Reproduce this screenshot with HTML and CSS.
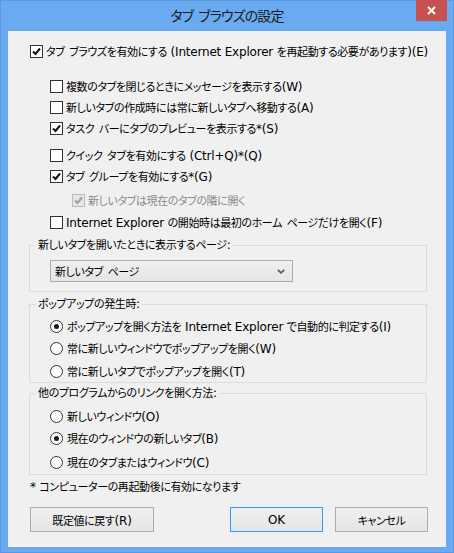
FILE: index.html
```html
<!DOCTYPE html>
<html lang="ja">
<head>
<meta charset="utf-8">
<title>タブ ブラウズの設定</title>
<link rel="stylesheet" href="styles.css">
</head>
<body>
<div class="window">
  <div class="titlebar">
    <span class="title">タブ ブラウズの設定</span>
    <button class="close" aria-label="閉じる">
      <svg width="9" height="9" viewBox="0 0 9 9"><path d="M1 1 L8 8 M8 1 L1 8" stroke="#fff" stroke-width="2" fill="none"/></svg>
    </button>
  </div>
  <div class="client">
    <label class="row main">
      <span class="cb"><svg viewBox="0 0 11 11"><path d="M2 5.5 L4.5 8 L9 2.5" stroke="#111" stroke-width="2" fill="none"/></svg></span>
      <span>タブ ブラウズを有効にする<span class="lat"> (Internet Explorer </span>を再起動する必要があります<span class="lat">)(E)</span></span>
    </label>

    <label class="row sub r1"><span class="cb"></span><span>複数のタブを閉じるときにメッセージを表示する<span class="lat">(W)</span></span></label>
    <label class="row sub r2"><span class="cb"></span><span>新しいタブの作成時には常に新しいタブへ移動する<span class="lat">(A)</span></span></label>
    <label class="row sub r3"><span class="cb"><svg viewBox="0 0 11 11"><path d="M2 5.5 L4.5 8 L9 2.5" stroke="#111" stroke-width="2" fill="none"/></svg></span><span>タスク バーにタブのプレビューを表示する<span class="lat">*(S)</span></span></label>
    <label class="row sub r4"><span class="cb"></span><span>クイック タブを有効にする<span class="lat"> (Ctrl+Q)*(Q)</span></span></label>
    <label class="row sub r5"><span class="cb"><svg viewBox="0 0 11 11"><path d="M2 5.5 L4.5 8 L9 2.5" stroke="#111" stroke-width="2" fill="none"/></svg></span><span>タブ グループを有効にする<span class="lat">*(G)</span></span></label>
    <label class="row subsub r6 disabled"><span class="cb"><svg viewBox="0 0 11 11"><path d="M2 5.5 L4.5 8 L9 2.5" stroke="#a0a0a0" stroke-width="2" fill="none"/></svg></span><span>新しいタブは現在のタブの隣に開く</span></label>
    <label class="row sub r7"><span class="cb"></span><span><span class="lat">Internet Explorer </span>の開始時は最初のホーム ページだけを開く<span class="lat">(F)</span></span></label>

    <fieldset class="group g1">
      <legend>新しいタブを開いたときに表示するページ<span class="lat">:</span></legend>
      <div class="gbody g1body">
        <div class="select">
          <span>新しいタブ ページ</span>
          <svg class="chev" width="8" height="5" viewBox="0 0 8 5"><path d="M0.8 0.8 L4 3.8 L7.2 0.8" stroke="#555" stroke-width="1.6" fill="none"/></svg>
        </div>
      </div>
    </fieldset>

    <fieldset class="group g2">
      <legend>ポップアップの発生時<span class="lat">:</span></legend>
      <div class="gbody g2body">
        <label class="row radio"><span class="rb on"></span><span>ポップアップを開く方法を<span class="lat"> Internet Explorer </span>で自動的に判定する<span class="lat">(I)</span></span></label>
        <label class="row radio m2"><span class="rb"></span><span>常に新しいウィンドウでポップアップを開く<span class="lat">(W)</span></span></label>
        <label class="row radio m3"><span class="rb"></span><span>常に新しいタブでポップアップを開く<span class="lat">(T)</span></span></label>
      </div>
    </fieldset>

    <fieldset class="group g3">
      <legend>他のプログラムからのリンクを開く方法<span class="lat">:</span></legend>
      <div class="gbody g3body">
        <label class="row radio"><span class="rb"></span><span>新しいウィンドウ<span class="lat">(O)</span></span></label>
        <label class="row radio m2"><span class="rb on"></span><span>現在のウィンドウの新しいタブ<span class="lat">(B)</span></span></label>
        <label class="row radio m4"><span class="rb"></span><span>現在のタブまたはウィンドウ<span class="lat">(C)</span></span></label>
      </div>
    </fieldset>

    <div class="note"><span class="lat">* </span>コンピューターの再起動後に有効になります</div>

    <div class="buttons">
      <button class="btn reset">既定値に戻す<span class="lat">(R)</span></button>
      <button class="btn ok"><span class="lat">OK</span></button>
      <button class="btn cancel">キャンセル</button>
    </div>
  </div>
</div>
</body>
</html>
```
FILE: styles.css
```css
* { box-sizing: border-box; }
html, body { margin: 0; padding: 0; }
body {
  width: 454px;
  height: 553px;
  font-family: "DejaVu Sans", "Noto Sans CJK JP", sans-serif;
  font-size: 11px;
  letter-spacing: -0.4px;
  word-spacing: 1.5px;
  font-feature-settings: "palt" 1;
  color: #000;
  overflow: hidden;
}
.lat {
  font-size: 12px;
  letter-spacing: -0.2px;
  word-spacing: 0;
}
.window {
  position: relative;
  width: 454px;
  height: 553px;
  background: #6aaaf0;
  box-shadow: inset 0 0 0 1px #5b98e0;
  padding: 0 8px 6px 8px;
  display: flex;
  flex-direction: column;
}
.titlebar {
  height: 31px;
  display: flex;
  align-items: center;
  justify-content: center;
  padding-bottom: 1px;
}
.title {
  font-family: "Noto Sans CJK JP", sans-serif;
  font-size: 14px;
  color: #1a1a1a;
  letter-spacing: -0.9px;
  word-spacing: 3px;
}
.close {
  position: absolute;
  top: 0;
  right: 7px;
  width: 31px;
  height: 21px;
  border: 0;
  padding: 0;
  background: #c75050;
  display: flex;
  align-items: center;
  justify-content: center;
}
.client {
  flex: 1;
  background: #f0f0f0;
  padding-top: 10px;
  display: flex;
  flex-direction: column;
  align-items: flex-start;
}
.row {
  display: flex;
  align-items: center;
  height: 20px;
  gap: 3px;
  white-space: nowrap;
}
.main { margin-left: 22px; }
.sub { margin-left: 42px; }
.subsub { margin-left: 64px; }
.r1 { margin-top: 15px; }
.r2 { margin-top: 1px; }
.r3 { margin-top: 1px; }
.r4 { margin-top: 7px; }
.r5 { margin-top: 1px; }
.r6 { margin-top: 4px; }
.r7 { margin-top: 2px; }
.disabled { color: #8a8a8a; }
.cb {
  width: 13px;
  height: 13px;
  border: 1px solid #333;
  background: #fff;
  display: flex;
  align-items: center;
  justify-content: center;
  flex: none;
}
.cb svg { width: 11px; height: 11px; display: block; }
.disabled .cb { border-color: #bcbcbc; background: #e6e6e6; }
.rb {
  width: 13px;
  height: 13px;
  border: 1px solid #333;
  border-radius: 50%;
  background: #fff;
  flex: none;
  display: flex;
  align-items: center;
  justify-content: center;
}
.rb.on::after {
  content: "";
  width: 5px;
  height: 5px;
  border-radius: 50%;
  background: #1a1a1a;
}
.radio { gap: 4px; }
.group {
  margin: 0 0 0 21px;
  padding: 0;
  width: 398px;
  border: 1px solid #dcdcdc;
  min-width: 0;
}
.group legend {
  margin-left: 6px;
  padding: 0 2px;
  line-height: 14px;
  height: 14px;
}
.g1 { margin-top: 6px; }
.g2 { margin-top: 5px; }
.g3 { margin-top: 3px; }
.gbody { padding-left: 20px; }
.g1body { padding-top: 8px; padding-bottom: 9px; }
.g2body { padding-top: 5px; padding-bottom: 1px; }
.g3body { padding-top: 6px; padding-bottom: 2px; }
.m2 { margin-top: 2px; }
.m3 { margin-top: 3px; }
.m4 { margin-top: 4px; }
.select {
  width: 243px;
  height: 22px;
  border: 1px solid #acacac;
  background: linear-gradient(#f0f0f0, #e5e5e5);
  display: flex;
  align-items: center;
  justify-content: space-between;
  padding: 0 7px 0 4px;
}
.chev { display: block; }
.note {
  margin: 4px 0 0 22px;
  height: 16px;
  line-height: 16px;
}
.buttons {
  margin-top: 12px;
  width: 100%;
  display: flex;
  padding: 0 18px 0 22px;
  gap: 12px;
}
.btn {
  height: 25px;
  border: 1px solid #acacac;
  background: linear-gradient(#f0f0f0, #e5e5e5);
  font: inherit;
  letter-spacing: inherit;
  word-spacing: inherit;
  color: #000;
  padding: 0;
}
.reset { width: 124px; margin-right: auto; }
.ok { width: 93px; border-color: #3399ff; }
.cancel { width: 93px; }
```
